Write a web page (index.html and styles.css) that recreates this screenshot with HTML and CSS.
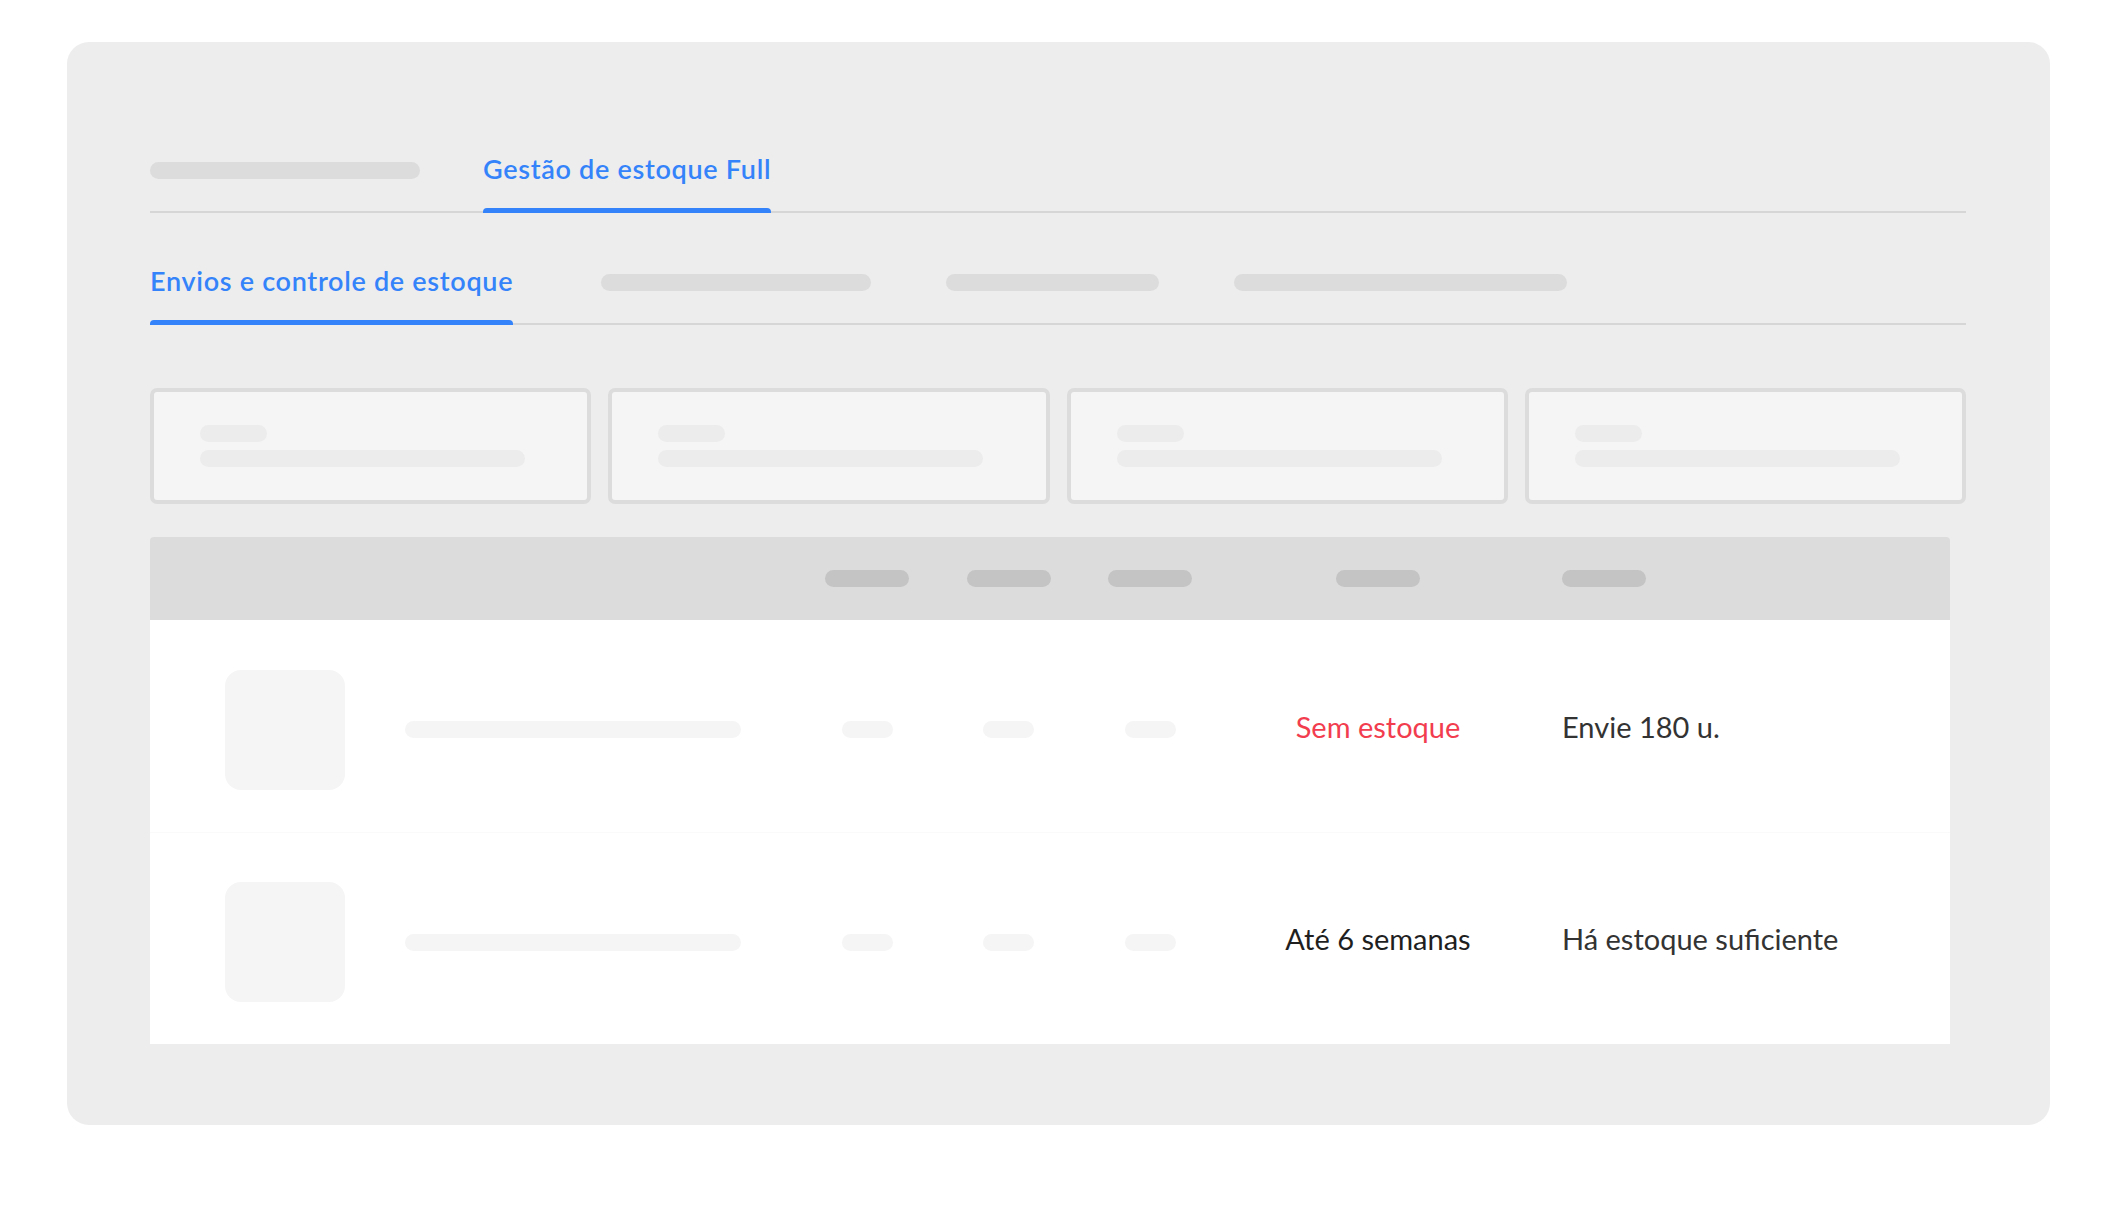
FILE: index.html
```html
<!DOCTYPE html>
<html lang="pt-BR">

<head>
    <meta charset="UTF-8">
    <meta name="viewport" content="width=device-width, initial-scale=1.0">
    <title>Gestão de estoque Full</title>
    <link rel="stylesheet" href="styles.css">
</head>

<body>

    <div class="frame">

        <div class="tabs tabs-top">
            <div class="tab">
                <div class="tab-label"><span class="pill pill-tab" style="width: 270px"></span></div>
                <div class="tab-line"></div>
            </div>
            <div class="tab active">
                <div class="tab-label">Gestão de estoque Full</div>
                <div class="tab-line"></div>
            </div>
        </div>

        <div class="tabs tabs-sub">
            <div class="tab active first">
                <div class="tab-label">Envios e controle de estoque</div>
                <div class="tab-line"></div>
            </div>
            <div class="tab">
                <div class="tab-label"><span class="pill pill-tab" style="width: 270px"></span></div>
                <div class="tab-line"></div>
            </div>
            <div class="tab">
                <div class="tab-label"><span class="pill pill-tab" style="width: 213px"></span></div>
                <div class="tab-line"></div>
            </div>
            <div class="tab">
                <div class="tab-label"><span class="pill pill-tab" style="width: 333px"></span></div>
                <div class="tab-line"></div>
            </div>
        </div>

        <div class="stats">
            <div class="stat">
                <span class="pill pill-stat small"></span>
                <span class="pill pill-stat long"></span>
            </div>
            <div class="stat">
                <span class="pill pill-stat small"></span>
                <span class="pill pill-stat long"></span>
            </div>
            <div class="stat">
                <span class="pill pill-stat small"></span>
                <span class="pill pill-stat long"></span>
            </div>
            <div class="stat">
                <span class="pill pill-stat small"></span>
                <span class="pill pill-stat long"></span>
            </div>
        </div>

        <div class="table">
            <div class="table-row table-head">
                <div class="cell"></div>
                <div class="cell center"><span class="pill pill-head"></span></div>
                <div class="cell center"><span class="pill pill-head"></span></div>
                <div class="cell center"><span class="pill pill-head"></span></div>
                <div class="cell center"><span class="pill pill-head"></span></div>
                <div class="cell last"><span class="pill pill-head"></span></div>
            </div>

            <div class="table-row item">
                <div class="cell product">
                    <div class="thumb"></div>
                    <span class="pill pill-row name"></span>
                </div>
                <div class="cell center"><span class="pill pill-row num"></span></div>
                <div class="cell center"><span class="pill pill-row num"></span></div>
                <div class="cell center"><span class="pill pill-row num"></span></div>
                <div class="cell center status danger">Sem estoque</div>
                <div class="cell last note">Envie 180 u.</div>
            </div>

            <div class="table-row item">
                <div class="cell product">
                    <div class="thumb"></div>
                    <span class="pill pill-row name"></span>
                </div>
                <div class="cell center"><span class="pill pill-row num"></span></div>
                <div class="cell center"><span class="pill pill-row num"></span></div>
                <div class="cell center"><span class="pill pill-row num"></span></div>
                <div class="cell center status">Até 6 semanas</div>
                <div class="cell last note">Há estoque suficiente</div>
            </div>
        </div>

    </div>

</body>

</html>
```

FILE: styles.css
```css
body {
    margin: 0;
    background-color: #fff;
    font-family: "Lato", "Liberation Sans", sans-serif;
}

.frame {
    width: 1983px;
    height: 1083px;
    margin: 42px 0 0 67px;
    padding: 111px 84px 0 83px;
    box-sizing: border-box;
    background-color: #ededed;
    border-radius: 22px;
}

.pill {
    display: block;
    height: 17px;
    border-radius: 9px;
}

/* abas */

.tabs {
    display: flex;
    border-bottom: 2px solid #d6d6d6;
}

.tabs-top {
    gap: 63px;
}

.tabs-sub {
    gap: 75px;
    margin-top: 52px;
}

.tab {
    display: flex;
    flex-direction: column;
}

.tab.first {
    margin-right: 13px;
}

.tab-label {
    height: 32px;
    line-height: 32px;
    font-size: 27px;
    font-weight: 600;
    letter-spacing: 0.7px;
    color: #3483fa;
    white-space: nowrap;
    display: flex;
    align-items: center;
}

.pill-tab {
    background-color: #dcdcdc;
    margin-top: 3px;
}

.tab-line {
    height: 5px;
    margin-top: 23px;
    margin-bottom: -2px;
    border-radius: 4px 4px 0 0;
}

.tab.active .tab-line {
    background-color: #3483fa;
}

/* cards */

.stats {
    display: grid;
    grid-template-columns: repeat(4, 1fr);
    gap: 17px;
    margin-top: 63px;
}

.stat {
    height: 116px;
    box-sizing: border-box;
    padding: 33px 46px;
    border: 4px solid #dcdcdc;
    border-radius: 7px;
    background-color: #f5f5f5;
    display: flex;
    flex-direction: column;
    gap: 8px;
}

.pill-stat {
    background-color: #ececec;
}

.pill-stat.small {
    width: 67px;
}

.pill-stat.long {
    width: 325px;
}

/* tabela */

.table {
    width: 1800px;
    margin-top: 33px;
}

.table-row {
    display: grid;
    grid-template-columns: 646px 142px 141px 142px 314px 1fr;
    align-items: center;
}

.table-head {
    height: 83px;
    background-color: #dcdcdc;
    border-radius: 4px 4px 0 0;
}

.cell.center {
    display: flex;
    justify-content: center;
    text-align: center;
}

.cell.last {
    padding-left: 27px;
}

.pill-head {
    width: 84px;
    background-color: #c4c4c4;
}

.item {
    height: 212px;
    box-sizing: border-box;
    padding-top: 7px;
    background-color: #fff;
    border-top: 1px solid #fafafa;
}

.table-head + .item {
    border-top: none;
}

.product {
    display: flex;
    align-items: center;
    gap: 60px;
    padding-left: 75px;
}

.thumb {
    width: 120px;
    height: 120px;
    border-radius: 16px;
    background-color: #f5f5f5;
}

.pill-row {
    background-color: #f5f5f5;
}

.pill-row.name {
    width: 336px;
}

.pill-row.num {
    width: 51px;
}

.status,
.note {
    font-size: 29px;
    line-height: 36px;
    padding-bottom: 6px;
    white-space: nowrap;
}

.status {
    color: #1f1f1f;
}

.status.danger {
    color: #f23d4f;
}

.note {
    color: #333;
}
```
